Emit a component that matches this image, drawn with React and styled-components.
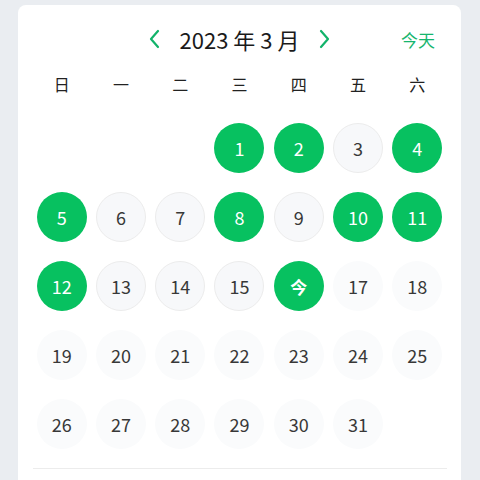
import React from "react";
import styled, { createGlobalStyle } from "styled-components";

const Global = createGlobalStyle`
  html, body { margin: 0; padding: 0; background: #eaedf1; }
  body { font-family: "Noto Sans CJK SC", "Noto Sans", sans-serif; overflow: hidden; }
  * { box-sizing: border-box; }
`;

const Page = styled.div`
  padding: 5px 19px 0 18px;
  height: 480px;
`;

const Card = styled.div`
  background: #ffffff;
  border-radius: 8px 8px 0 0;
  padding: 0 14px 40px;
  min-height: 520px;
`;

const Header = styled.div`
  height: 68px;
  display: grid;
  grid-template-columns: 1fr auto 1fr;
  align-items: center;
`;

const TitleGroup = styled.div`
  display: flex;
  align-items: center;
  gap: 16px;
`;

const Title = styled.div`
  font-size: 22px;
  color: #1a1a1a;
  line-height: 1;
`;

const NavButton = styled.button`
  border: 0;
  background: none;
  padding: 0;
  width: 18px;
  height: 24px;
  display: flex;
  align-items: center;
  justify-content: center;
  color: #12b36a;
  cursor: pointer;
`;

const TodayLink = styled.div`
  justify-self: end;
  padding-right: 12px;
  font-size: 17px;
  color: #16b56e;
`;

const WeekRow = styled.div`
  display: grid;
  grid-template-columns: repeat(7, 1fr);
  height: 22px;
  align-items: center;
  margin-bottom: 28px;
`;

const WeekDay = styled.div`
  text-align: center;
  font-size: 16px;
  line-height: 22px;
  color: #222;
`;

const Grid = styled.div`
  display: grid;
  grid-template-columns: repeat(7, 1fr);
  row-gap: 19px;
`;

const Slot = styled.div`
  display: flex;
  justify-content: center;
`;

const Day = styled.div`
  width: 50px;
  height: 50px;
  border-radius: 50%;
  display: flex;
  align-items: center;
  justify-content: center;
  font-size: ${(p) => (p.$kind === "today" ? "17px" : "18px")};
  color: ${(p) => (p.$kind === "done" || p.$kind === "today" ? "#ffffff" : "#383838")};
  background: ${(p) =>
    p.$kind === "done" || p.$kind === "today"
      ? "#07c160"
      : p.$kind === "past"
      ? "#f7f8fa"
      : "#fafbfc"};
  border: 1px solid
    ${(p) => (p.$kind === "past" ? "#ececec" : "transparent")};
  font-weight: ${(p) => (p.$kind === "today" ? 700 : 400)};
`;

const Divider = styled.div`
  height: 1px;
  background: #ececec;
  margin-top: 19px;
  margin-left: 1px;
`;

const Chevron = ({ dir }) => (
  <svg width="14" height="20" viewBox="0 0 14 20" fill="none">
    <polyline
      points={dir === "left" ? "10,2 3,10 10,18" : "4,2 11,10 4,18"}
      stroke="currentColor"
      strokeWidth="2.2"
      strokeLinecap="round"
      strokeLinejoin="round"
    />
  </svg>
);

const weekdays = ["日", "一", "二", "三", "四", "五", "六"];
const done = new Set([1, 2, 4, 5, 8, 10, 11, 12]);
const TODAY = 16;

export default function App() {
  const cells = [];
  for (let i = 0; i < 3; i++) cells.push(null);
  for (let d = 1; d <= 31; d++) cells.push(d);

  const kindOf = (d) => {
    if (d === TODAY) return "today";
    if (done.has(d)) return "done";
    if (d < TODAY) return "past";
    return "future";
  };

  return (
    <Page>
      <Global />
      <Card>
        <Header>
          <span />
          <TitleGroup>
            <NavButton aria-label="上一月">
              <Chevron dir="left" />
            </NavButton>
            <Title>2023 年 3 月</Title>
            <NavButton aria-label="下一月">
              <Chevron dir="right" />
            </NavButton>
          </TitleGroup>
          <TodayLink>今天</TodayLink>
        </Header>
        <WeekRow>
          {weekdays.map((w) => (
            <WeekDay key={w}>{w}</WeekDay>
          ))}
        </WeekRow>
        <Grid>
          {cells.map((d, i) => (
            <Slot key={i}>
              {d && <Day $kind={kindOf(d)}>{d === TODAY ? "今" : d}</Day>}
            </Slot>
          ))}
        </Grid>
        <Divider />
      </Card>
    </Page>
  );
}
